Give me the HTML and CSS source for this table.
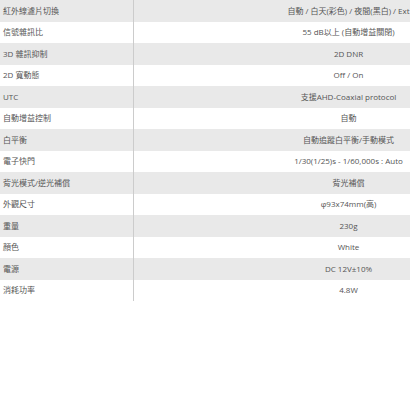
FILE: index.html
```html
<!DOCTYPE html>
<html lang="zh-Hant">
<head>
<meta charset="utf-8">
<link rel="stylesheet" href="styles.css">
</head>
<body>
<div class="wrap">
<table class="spec">
<tbody>
<tr><td class="k">紅外線濾片切換</td><td class="v">自動 / 白天(彩色) / 夜間(黑白) / Ext</td></tr>
<tr><td class="k">信號雜訊比</td><td class="v">55 dB以上 (自動增益關閉)</td></tr>
<tr><td class="k">3D 雜訊抑制</td><td class="v">2D DNR</td></tr>
<tr><td class="k">2D 寬動態</td><td class="v">Off / On</td></tr>
<tr><td class="k">UTC</td><td class="v">支援AHD-Coaxial protocol</td></tr>
<tr><td class="k">自動增益控制</td><td class="v">自動</td></tr>
<tr><td class="k">白平衡</td><td class="v">自動追蹤白平衡/手動模式</td></tr>
<tr><td class="k">電子快門</td><td class="v">1/30(1/25)s - 1/60,000s : Auto</td></tr>
<tr><td class="k">背光模式/逆光補償</td><td class="v">背光補償</td></tr>
<tr><td class="k">外觀尺寸</td><td class="v">φ93x74mm(高)</td></tr>
<tr><td class="k">重量</td><td class="v">230g</td></tr>
<tr><td class="k">顏色</td><td class="v">White</td></tr>
<tr><td class="k">電源</td><td class="v">DC 12V±10%</td></tr>
<tr><td class="k">消耗功率</td><td class="v">4.8W</td></tr>
</tbody>
</table>
</div>
</body>
</html>
```
FILE: styles.css
```css
html, body {
  margin: 0;
  padding: 0;
  background: #fff;
  overflow: hidden;
}
.wrap {
  width: 563px;
}
.spec {
  width: 563px;
  border-collapse: collapse;
  table-layout: fixed;
  font-family: "Open Sans", "Noto Sans CJK TC", sans-serif;
  font-size: 8px;
  color: #555;
}
.spec tr {
  height: 21.5px;
}
.spec tr:nth-child(odd) {
  background: #e9e9e9;
}
.spec td {
  padding: 0 3px;
  line-height: 12px;
  vertical-align: middle;
  white-space: nowrap;
}
.spec .k {
  width: 127px;
  border-right: 1px solid #cccccc;
  text-align: left;
}
.spec .v {
  text-align: center;
}
```
